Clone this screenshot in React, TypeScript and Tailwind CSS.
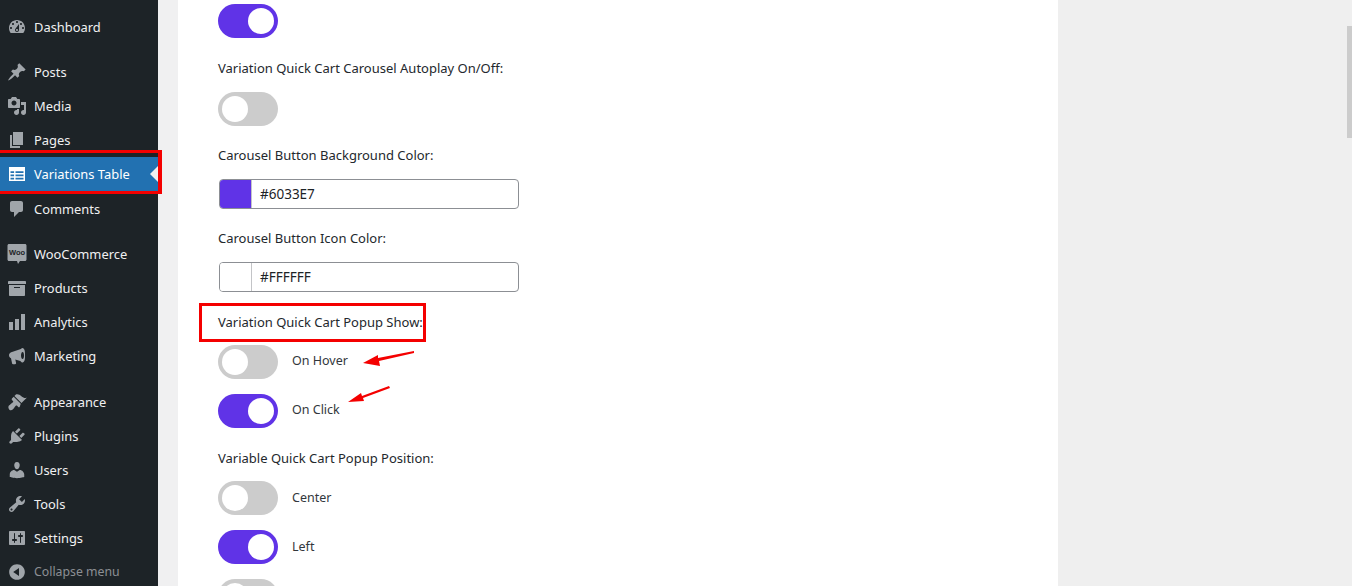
const GRAY = 'fill-[#a0a5aa]';

const PATHS: Record<string, string> = {
  dashboard:
    'M3.76 16h12.48c1.1-1.37 1.76-3.11 1.76-5 0-4.42-3.58-8-8-8s-8 3.58-8 8c0 1.89.66 3.63 1.76 5zM10 4c.55 0 1 .45 1 1s-.45 1-1 1-1-.45-1-1 .45-1 1-1zM6 6c.55 0 1 .45 1 1s-.45 1-1 1-1-.45-1-1 .45-1 1-1zm8 0c.55 0 1 .45 1 1s-.45 1-1 1-1-.45-1-1 .45-1 1-1zm-5.37 5.55L12 7v6c0 1.1-.9 2-2 2s-2-.9-2-2c0-.57.24-1.08.63-1.45zM4 10c.55 0 1 .45 1 1s-.45 1-1 1-1-.45-1-1 .45-1 1-1zm12 0c.55 0 1 .45 1 1s-.45 1-1 1-1-.45-1-1 .45-1 1-1zm-5 3c0-.55-.45-1-1-1s-1 .45-1 1 .45 1 1 1 1-.45 1-1z',
  posts:
    'M10.44 3.02l1.82-1.82 6.36 6.35-1.83 1.82c-1.05-.68-2.48-.57-3.41.36l-.75.75c-.92.93-1.04 2.35-.35 3.41l-1.83 1.82-2.41-2.41-2.8 2.79c-.42.42-3.38 2.71-3.8 2.29s1.86-3.39 2.28-3.81l2.79-2.79L4.1 9.36l1.83-1.82c1.05.69 2.48.57 3.4-.36l.75-.75c.93-.92 1.05-2.35.36-3.41z',
  media:
    'M13 11V4c0-.55-.45-1-1-1h-1.67L9 1H5L3.67 3H2c-.55 0-1 .45-1 1v7c0 .55.45 1 1 1h10c.55 0 1-.45 1-1zM7 4.5c1.38 0 2.5 1.12 2.5 2.5S8.38 9.5 7 9.5 4.5 8.38 4.5 7 5.62 4.5 7 4.5zM14 6h5v10.5c0 1.38-1.12 2.5-2.5 2.5S14 17.88 14 16.5s1.12-2.5 2.5-2.5c.17 0 .34.02.5.05V9h-3V6zm-4 8.05V13h2v3.5c0 1.38-1.12 2.5-2.5 2.5S7 17.88 7 16.5 8.12 14 9.5 14c.17 0 .34.02.5.05z',
  pages: 'M6 15V2h10v13H6zm-1 1h8v2H3V5h2v11z',
  table:
    'M2 3h16v14H2V3zm1.500 4.200v1.800h3.600V7.200H3.500zm5 0v1.800h8V7.200h-8zm-5 3.300v1.800h3.600v-1.800H3.500zm5 0v1.800h8v-1.800h-8zm-5 3.300v1.700h3.600v-1.700H3.500zm5 0v1.700h8v-1.700h-8z',
  comments:
    'M5 2h9c1.1 0 2 .9 2 2v7c0 1.1-.9 2-2 2h-2l-5 5v-5H5c-1.1 0-2-.9-2-2V4c0-1.1.9-2 2-2z',
  products:
    'M19 4v2H1V4c0-.55.45-1 1-1h16c.55 0 1 .45 1 1zM2 7h16v10c0 .55-.45 1-1 1H3c-.55 0-1-.45-1-1V7zm11 3V9H7v1h6z',
  analytics: 'M18 18V2h-4v16h4zm-6 0V7H8v11h4zm-6 0v-8H2v8h4z',
  marketing:
    'M18 7c0-2.8-1-5-2.400-5-.6 0-1.200.4-1.700 1.100L4.200 6.300C2.900 6.700 2 7.900 2 9.300c0 1.300.8 2.500 2 2.900l1.100 5.300c.1.5.5.8 1 .8h2c.6 0 1.100-.6 1-1.200l-.8-3.600 5 1.500c.6.9 1.400 1.500 2.300 1.500 1.400 0 2.400-2.200 2.400-5V7zm-2.400 6c-.9 0-1.600-1.600-1.600-3.500S14.700 6 15.600 6 17 7.600 17 9.500 16.500 13 15.600 13z',
  appearance:
    'M14.48 11.06L7.41 3.99l1.5-1.5c.5-.56 2.3-.47 3.51.32 1.21.8 1.43 1.28 2.91 2.1 1.18.64 2.45 1.26 4.45.85zm-.71.71L6.7 4.7 4.93 6.47c-.39.39-.39 1.02 0 1.41l1.06 1.06c.39.39.39 1.03 0 1.42-.6.6-1.43 1.11-2.21 1.69-.35.26-.7.53-1.01.84C1.43 13.23.91 15.24 1.87 17.1c.96 1.86 2.98 1.33 4.34-.02.31-.31.58-.66.84-1.01.58-.78 1.09-1.61 1.69-2.21.39-.39 1.03-.39 1.42 0l1.06 1.06c.39.39 1.02.39 1.41 0z',
  plugins:
    'M13.11 4.36L9.87 7.6 8 5.73l3.24-3.24c.35-.34 1.05-.2 1.56.32.52.51.66 1.21.31 1.55zm-8 1.77l.91-1.12 9.01 9.01-1.19.84c-.71.71-2.63 1.16-3.82 1.16H6.14L4.9 17.26c-.59.59-1.54.59-2.12 0-.59-.58-.59-1.53 0-2.12l1.24-1.24v-3.88c0-1.13.4-3.19 1.09-3.89zm7.26 3.97l3.24-3.24c.34-.35 1.04-.21 1.55.31.52.51.66 1.21.31 1.55l-3.24 3.25z',
  users:
    'M10 9.25c-2.27 0-2.73-3.44-2.73-3.44C7 4.02 7.82 2 9.97 2c2.16 0 2.98 2.02 2.71 3.81 0 0-.41 3.44-2.68 3.44zm0 2.57L12.72 10c2.39 0 4.52 2.33 4.52 4.53v2.49s-3.65 1.13-7.24 1.13c-3.65 0-7.24-1.13-7.24-1.13v-2.49c0-2.25 1.94-4.48 4.47-4.48z',
  tools:
    'M16.68 9.77c-1.34 1.34-3.3 1.67-4.95.99l-5.41 6.52c-.99.99-2.59.99-3.58 0s-.99-2.59 0-3.57l6.52-5.42c-.68-1.65-.35-3.61.99-4.95 1.28-1.28 3.12-1.62 4.72-1.06l-2.89 2.89 2.82 2.82 2.86-2.87c.53 1.58.18 3.39-1.08 4.65zM3.81 16.21c.4.39 1.04.39 1.43 0 .4-.4.4-1.04 0-1.43-.39-.4-1.03-.4-1.43 0-.39.39-.39 1.03 0 1.43z',
  settings:
    'M18 16V4c0-.55-.45-1-1-1H3c-.55 0-1 .45-1 1v12c0 .55.45 1 1 1h14c.55 0 1-.45 1-1zM8 11h1c.55 0 1 .45 1 1s-.45 1-1 1H8v1.5c0 .28-.22.5-.5.5s-.5-.22-.5-.5V13H6c-.55 0-1-.45-1-1s.45-1 1-1h1V5.5c0-.28.22-.5.5-.5s.5.22.5.5V11zm5-2h-1c-.55 0-1-.45-1-1s.45-1 1-1h1V5.5c0-.28.22-.5.5-.5s.5.22.5.5V7h1c.55 0 1 .45 1 1s-.45 1-1 1h-1v5.5c0 .28-.22.5-.5.5s-.5-.22-.5-.5V9z',
  collapse:
    'M10 2.16c4.33 0 7.84 3.51 7.84 7.84s-3.51 7.84-7.84 7.84S2.16 14.33 2.16 10 5.71 2.16 10 2.16zm2 11.72V6.12L6.18 9.97z',
};

function MenuIcon({ name, active }: { name: string; active?: boolean }) {
  if (name === 'woo') {
    return (
      <svg viewBox="0 0 20 20" className="h-5 w-5 shrink-0">
        <path
          className={GRAY}
          d="M2 0h16c.8 0 1.500.7 1.500 1.500v14c0 .8-.7 1.500-1.500 1.500h-5l-2 3-1-3H2c-.8 0-1.500-.7-1.500-1.500v-14C.5.7 1.200 0 2 0z"
        />
        <text
          x="10"
          y="11"
          textAnchor="middle"
          className="fill-[#1d2327] text-[7.500px] font-bold [font-family:'Liberation_Sans',sans-serif]"
        >
          Woo
        </text>
      </svg>
    );
  }
  return (
    <svg viewBox="0 0 20 20" className="h-5 w-5 shrink-0">
      <path className={active ? 'fill-white' : GRAY} fillRule="evenodd" d={PATHS[name]} />
    </svg>
  );
}

function MenuItem({ icon, label, active }: { icon: string; label: string; active?: boolean }) {
  return (
    <div
      className={`relative flex h-[34px] shrink-0 items-center gap-[7px] pl-[7px] ${
        active ? 'bg-[#2271b1] text-white' : 'text-[#f0f0f1]'
      }`}
    >
      <MenuIcon name={icon} active={active} />
      <span className="pt-px">{label}</span>
      {active && (
        <span className="absolute right-0 top-[9px] h-0 w-0 border-y-8 border-r-8 border-y-transparent border-r-[#f0f0f1]" />
      )}
    </div>
  );
}

function Sidebar() {
  return (
    <aside className="flex h-[586px] w-[158px] shrink-0 flex-col overflow-hidden bg-[#1d2327] pt-[10px] text-[12.900px]">
      <MenuItem icon="dashboard" label="Dashboard" />
      <div className="h-[11px] shrink-0" />
      <MenuItem icon="posts" label="Posts" />
      <MenuItem icon="media" label="Media" />
      <MenuItem icon="pages" label="Pages" />
      <MenuItem icon="table" label="Variations Table" active />
      <div className="h-px shrink-0" />
      <MenuItem icon="comments" label="Comments" />
      <div className="h-[11px] shrink-0" />
      <MenuItem icon="woo" label="WooCommerce" />
      <MenuItem icon="products" label="Products" />
      <MenuItem icon="analytics" label="Analytics" />
      <MenuItem icon="marketing" label="Marketing" />
      <div className="h-3 shrink-0" />
      <MenuItem icon="appearance" label="Appearance" />
      <MenuItem icon="plugins" label="Plugins" />
      <MenuItem icon="users" label="Users" />
      <MenuItem icon="tools" label="Tools" />
      <MenuItem icon="settings" label="Settings" />
      <div className="flex h-[34px] shrink-0 items-center gap-[7px] pl-[7px] text-[12.300px] text-[#8c8f94]">
        <MenuIcon name="collapse" />
        <span className="pt-px">Collapse menu</span>
      </div>
    </aside>
  );
}

function Toggle({
  on,
  label,
  labelClass,
  className,
}: {
  on?: boolean;
  label?: string;
  labelClass?: string;
  className?: string;
}) {
  return (
    <div className={`flex items-center ${className ?? ''}`}>
      <div
        className={`flex h-[34px] w-[60px] shrink-0 items-center rounded-full px-1 ${
          on ? 'justify-end bg-[#6033e7]' : 'justify-start bg-[#cccccc]'
        }`}
      >
        <div className="h-[26px] w-[26px] rounded-full bg-white" />
      </div>
      {label && <span className={`ml-[14px] text-[12.500px] text-[#32373c] ${labelClass ?? ''}`}>{label}</span>}
    </div>
  );
}

function ColorField({ swatch, value, className }: { swatch: string; value: string; className?: string }) {
  return (
    <div className={`ml-px flex h-[30px] w-[300px] overflow-hidden rounded border border-[#8c8f94] ${className ?? ''}`}>
      <div className={`w-[32px] border-r border-[#c3c4c7] ${swatch}`} />
      <div className="flex items-center pl-2 text-[13.500px] text-[#1d2327]">{value}</div>
    </div>
  );
}

function Label({ children, className }: { children: string; className?: string }) {
  return <div className={`h-5 text-[13px] leading-5 text-[#23282d] ${className ?? ''}`}>{children}</div>;
}

export default function App() {
  return (
    <div className="relative flex h-[586px] w-[1352px] overflow-hidden bg-[#f0f0f1] [font-family:'Noto_Sans','Open_Sans',sans-serif]">
      <Sidebar />
      <main className="ml-5 h-full w-[880px] bg-white pl-10 pt-1">
        <Toggle on />
        <Label className="mt-5">Variation Quick Cart Carousel Autoplay On/Off:</Label>
        <Toggle className="mt-[14px]" />
        <Label className="mt-[19px]">Carousel Button Background Color:</Label>
        <ColorField swatch="bg-[#6033e7]" value="#6033E7" className="mt-[14px]" />
        <Label className="mt-[19px]">Carousel Button Icon Color:</Label>
        <ColorField swatch="bg-white" value="#FFFFFF" className="mt-[14px]" />
        <Label className="mt-5">Variation Quick Cart Popup Show:</Label>
        <Toggle className="mt-[13px]" label="On Hover" labelClass="mb-0.5" />
        <Toggle on className="mt-[15px]" label="On Click" labelClass="mb-0.5" />
        <Label className="mt-5">Variable Quick Cart Popup Position:</Label>
        <Toggle className="mt-[13px]" label="Center" />
        <Toggle on className="mt-[15px]" label="Left" />
        <Toggle className="mt-[15px]" />
      </main>
      <div className="flex-1 bg-[#efefef]" />

      <div className="absolute left-[1347px] top-[26px] h-[112px] w-[5px] bg-[#cccccc]" />
      <div className="absolute left-0 top-[150px] h-[44px] w-[162px] border-y-[3px] border-r-4 border-[#f40000]" />
      <div className="absolute left-[199px] top-[303px] h-[39px] w-[227px] border-[3px] border-[#f40000]" />
      <svg viewBox="0 0 52 16" className="absolute left-[363px] top-[351px] h-4 w-[52px]">
        <path d="M51 0 L15 7 L15 4 L0 12 L17 15 L16 10 L51 2 Z" className="fill-[#f40000]" />
      </svg>
      <svg viewBox="0 0 42 17" className="absolute left-[348px] top-[386px] h-[17px] w-[42px]">
        <path d="M41 0 L14 10 L13 7 L0 16 L16 15 L15 12 L42 2 Z" className="fill-[#f40000]" />
      </svg>
    </div>
  );
}
